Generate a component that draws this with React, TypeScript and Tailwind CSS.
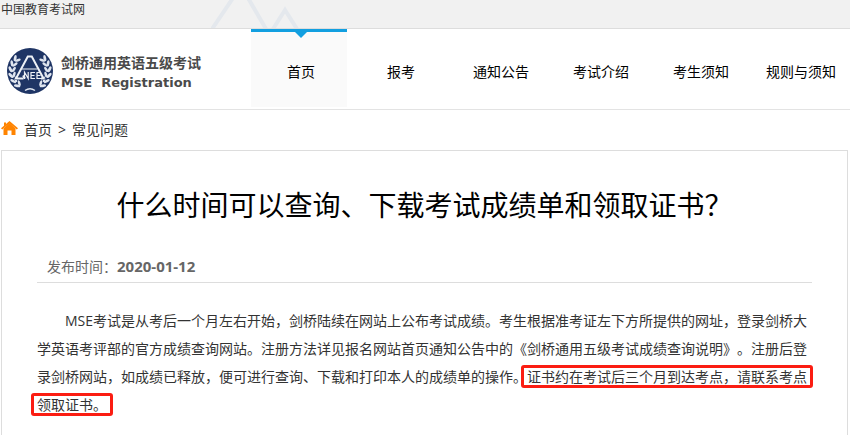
import type { ReactNode } from "react";

const navItems = ["首页", "报考", "通知公告", "考试介绍", "考生须知", "规则与须知"];

// position of each pair of leaves along the wreath, in degrees
const leaves = [-38, -20, -2, 16, 34, 52];

function Emblem() {
  return (
    <svg viewBox="0 0 46 46" className="size-[46px] shrink-0" role="img" aria-label="NEEA">
      <circle cx="23" cy="23" r="23" fill="#1f3565" />
      {leaves.map((angle) => (
        <g key={angle} fill="#dfe5ef">
          <g transform={`rotate(${-angle} 23 23)`}>
            <ellipse cx="3.4" cy="22" rx="1.4" ry="3.2" transform="rotate(-28 3.4 22)" />
            <ellipse cx="6.8" cy="22" rx="1.3" ry="3" transform="rotate(34 6.8 22)" />
          </g>
          <g transform={`rotate(${angle} 23 23)`}>
            <ellipse cx="42.6" cy="22" rx="1.4" ry="3.2" transform="rotate(28 42.6 22)" />
            <ellipse cx="39.2" cy="22" rx="1.3" ry="3" transform="rotate(-34 39.2 22)" />
          </g>
        </g>
      ))}
      <path d="M18 42.5 Q23 39 28 42.5" fill="none" stroke="#dfe5ef" strokeWidth="1.4" />
      <path d="M23 5 L38.5 32 H7.5 Z" fill="#1f3565" />
      <path
        d="M18 30.5 L16 27.5 M16.5 30.5 H9 L20.8 8.5 H24.8 L36.5 30.5 H34"
        fill="none"
        stroke="#eef1f6"
        strokeWidth="2"
      />
      <path
        d="M15 21 H30.5 M17.5 31 V24.2 L21.2 30.5 V24 M28 24.5 H24 V30.5 H28 M24 27.5 H27.5 M34 24.5 H30 V30.5 H34 M30 27.5 H33.5"
        fill="none"
        stroke="#eef1f6"
        strokeWidth="1.2"
      />
    </svg>
  );
}

function HomeIcon() {
  return (
    <svg viewBox="0 0 17 15" className="mb-1 h-[15px] w-[17px]" fill="#ff8400" aria-hidden="true">
      <path d="M8.5 0 L17 7.3 L15.8 8.6 L8.5 2.5 L1.2 8.6 L0 7.3 L3 4.7 V1.5 H5 V3 Z" />
      <path d="M8.5 2 L14.5 7.5 V14 H10.5 V9.5 H6.5 V14 H2.5 V7.5 Z" />
    </svg>
  );
}

function Highlight({ children }: { children: ReactNode }) {
  return (
    <mark className="relative whitespace-nowrap bg-transparent text-inherit">
      {children}
      <span className="pointer-events-none absolute -inset-x-1.5 -inset-y-0.5 rounded-[3px] border-3 border-[#fb1d12]" />
    </mark>
  );
}

export default function App() {
  return (
    <div className="bg-white font-['Open_Sans','Noto_Sans_CJK_SC',sans-serif] text-sm text-[#333] [text-spacing-trim:space-all]">
      <div className="relative h-[29px] overflow-hidden border-b border-[#ddd] bg-[#f1f1f1]">
        <svg
          className="absolute left-[211px] top-0 h-7 w-[90px]"
          viewBox="0 0 90 28"
          fill="none"
          stroke="#e4e8ed"
          strokeWidth="4"
          aria-hidden="true"
        >
          <path d="M1 29 L22 -2 M37 -2 L55 29 M62 29 L74 10 L86 29" />
        </svg>
        <a href="#" className="relative block pl-px text-xs leading-5">
          中国教育考试网
        </a>
      </div>

      <header className="flex h-[81px] justify-between border-b border-[#e3e3e3]">
        <a href="#" className="flex items-center gap-2 pl-[7px] pb-1 pt-2 text-[#4a4a4a]">
          <Emblem />
          <span className="block pt-1">
            <span className="block text-sm font-bold leading-5">剑桥通用英语五级考试</span>
            <span className="block whitespace-pre font-['DejaVu_Sans',sans-serif] text-[13px] font-bold leading-5">
              MSE  Registration
            </span>
          </span>
        </a>
        <nav className="flex gap-1 pr-[3px] text-black">
          {navItems.map((item, i) => (
            <a
              key={item}
              href="#"
              className={
                i === 0
                  ? "relative flex h-[78px] w-24 items-center justify-center border-t-3 border-[#129fe0] bg-[#fafafa] pl-1 pt-1"
                  : "flex h-[78px] w-24 items-center justify-center border-t-3 border-transparent pl-1 pt-1"
              }
            >
              {i === 0 && (
                <svg
                  viewBox="0 0 12 6"
                  className="absolute left-11 top-0 h-1.5 w-3"
                  fill="#129fe0"
                  aria-hidden="true"
                >
                  <path d="M0 0 H12 L6 6 Z" />
                </svg>
              )}
              {item}
            </a>
          ))}
        </nav>
      </header>

      <nav aria-label="面包屑" className="flex h-10 items-center gap-1.5 pl-px">
        <HomeIcon />
        <a href="#">首页</a>
        <span>&gt;</span>
        <a href="#">常见问题</a>
      </nav>

      <main className="ml-px mr-0.5 border border-[#ddd] px-[35px] pb-8">
        <h1 className="pt-8 text-center text-[28px] leading-[44px] text-black">
          什么时间可以查询、下载考试成绩单和领取证书？
        </h1>
        <p className="mt-6 border-b border-[#ddd] pl-2.5 leading-[31px] text-[#666]">
          发布时间：
          <time dateTime="2020-01-12" className="text-[15px] font-bold">
            2020-01-12
          </time>
        </p>
        <p className="mt-6 indent-7 leading-7">
          MSE考试是从考后一个月左右开始，剑桥陆续在网站上公布考试成绩。考生根据准考证左下方所提供的网址，登录剑桥大学英语考评部的官方成绩查询网站。注册方法详见报名网站首页通知公告中的《剑桥通用五级考试成绩查询说明》。注册后登录剑桥网站，如成绩已释放，便可进行查询、下载和打印本人的成绩单的操作。
          <Highlight>证书约在考试后三个月到达考点，请联系考点</Highlight>
          <wbr />
          <Highlight>领取证书。</Highlight>
        </p>
      </main>
    </div>
  );
}
